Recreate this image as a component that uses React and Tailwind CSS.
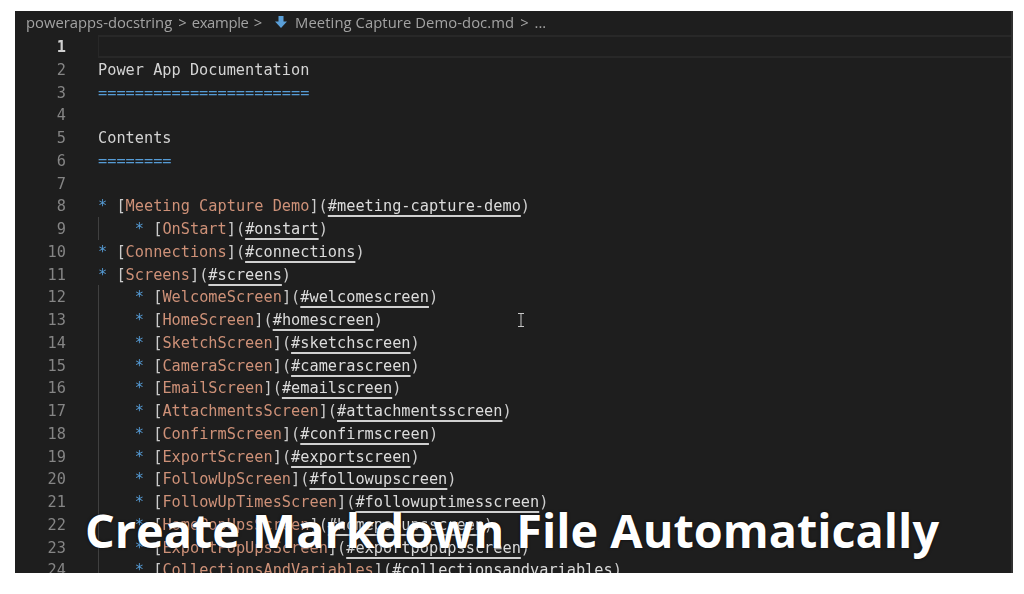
const nested = (name, href) => ({ indent: true, name, href });
const top = (name, href) => ({ indent: false, name, href });
const links = {
  8: top("Meeting Capture Demo", "#meeting-capture-demo"),
  9: nested("OnStart", "#onstart"),
  10: top("Connections", "#connections"),
  11: top("Screens", "#screens"),
  12: nested("WelcomeScreen", "#welcomescreen"),
  13: nested("HomeScreen", "#homescreen"),
  14: nested("SketchScreen", "#sketchscreen"),
  15: nested("CameraScreen", "#camerascreen"),
  16: nested("EmailScreen", "#emailscreen"),
  17: nested("AttachmentsScreen", "#attachmentsscreen"),
  18: nested("ConfirmScreen", "#confirmscreen"),
  19: nested("ExportScreen", "#exportscreen"),
  20: nested("FollowUpScreen", "#followupscreen"),
  21: nested("FollowUpTimesScreen", "#followuptimesscreen"),
  22: nested("HomePopUpsScreen", "#homepopupsscreen"),
  23: nested("ExportPopUpsScreen", "#exportpopupsscreen"),
  24: nested("CollectionsAndVariables", "#collectionsandvariables"),
};
const plain = { 2: "Power App Documentation", 5: "Contents" };
const rules = { 3: "=======================", 6: "========" };
const lineNumbers = Array.from({ length: 24 }, (_, i) => i + 1);

function LinkText({ item }) {
  return (
    <>
      <span className="text-[#569cd6]">* </span>
      <span className="text-[#cccccc]">[</span>
      <span className="text-[#ce9178]">{item.name}</span>
      <span className="text-[#cccccc]">](</span>
      <span className="text-[#dcdcdc] underline decoration-2 underline-offset-[4px] decoration-[#d0d0d0]">{item.href}</span>
      <span className="text-[#cccccc]">)</span>
    </>
  );
}

function Row({ n }) {
  const item = links[n];
  return (
    <div className="flex h-[22.75px] shrink-0 items-stretch leading-[24.75px]">
      <div className={`w-[51px] shrink-0 text-right ${n === 1 ? "font-bold text-[#d0d0d0]" : "text-[#858585]"}`}>{n}</div>
      <div className={`ml-[32px] min-w-0 flex-1 whitespace-pre ${n === 1 ? "border-y-2 border-l border-[#282828]" : ""}`}>
        {plain[n] && <span className="text-[#d4d4d4]">{plain[n]}</span>}
        {rules[n] && <span className="text-[#569cd6]">{rules[n]}</span>}
        {item && !item.indent && <LinkText item={item} />}
        {item && item.indent && (
          <div className="h-full border-l border-[#404040] pl-[35.8px]">
            <LinkText item={item} />
          </div>
        )}
      </div>
    </div>
  );
}

export default function App() {
  return (
    <div className="h-[594px] w-[1024px] overflow-hidden bg-white pl-[15px] pt-[11px]">
      <div className="relative flex h-[562px] w-[998px] flex-col overflow-hidden border-r-2 border-[#303030] bg-[#1e1e1e]">
        <div className="flex h-[24px] shrink-0 items-center gap-[6px] pb-[2px] pl-[11px] font-['Open_Sans',sans-serif] text-[14.8px] text-[#a3a3a3] blur-[0.3px]">
          <span>powerapps-docstring</span>
          <span>&gt;</span>
          <span className="-ml-[1px] -mr-[1px] tracking-[-0.3px]">example</span>
          <span>&gt;</span>
          <svg viewBox="0 0 12 14" className="ml-[7px] mr-[2px] h-[14px] w-[12px]" fill="#5a9fd8">
            <path d="M3.5 1h5v5.5H12L6 13 0 6.5h3.5z" />
          </svg>
          <span className="tracking-[0.07px]">Meeting Capture Demo-doc.md</span>
          <span>&gt;</span>
          <span>...</span>
        </div>
        <div className="flex flex-col font-['DejaVu_Sans_Mono',monospace] text-[15.27px] blur-[0.35px]">
          {lineNumbers.map((n) => (
            <Row key={n} n={n} />
          ))}
        </div>
        <svg viewBox="0 0 8 14" className="absolute left-[502px] top-[302px] h-[14px] w-[8px]" fill="none" stroke="#c8c8c8" strokeWidth="1">
          <path d="M1 .5h6M4 .5v13M1 13.5h6" />
        </svg>
        <div className="absolute left-[70px] top-[489px] whitespace-nowrap font-['Open_Sans',sans-serif] text-[46.8px] font-bold leading-[60px] text-white [text-shadow:0_0_3px_rgba(0,0,0,0.75)]">
          Create Markdown File Automatically
        </div>
      </div>
    </div>
  );
}
